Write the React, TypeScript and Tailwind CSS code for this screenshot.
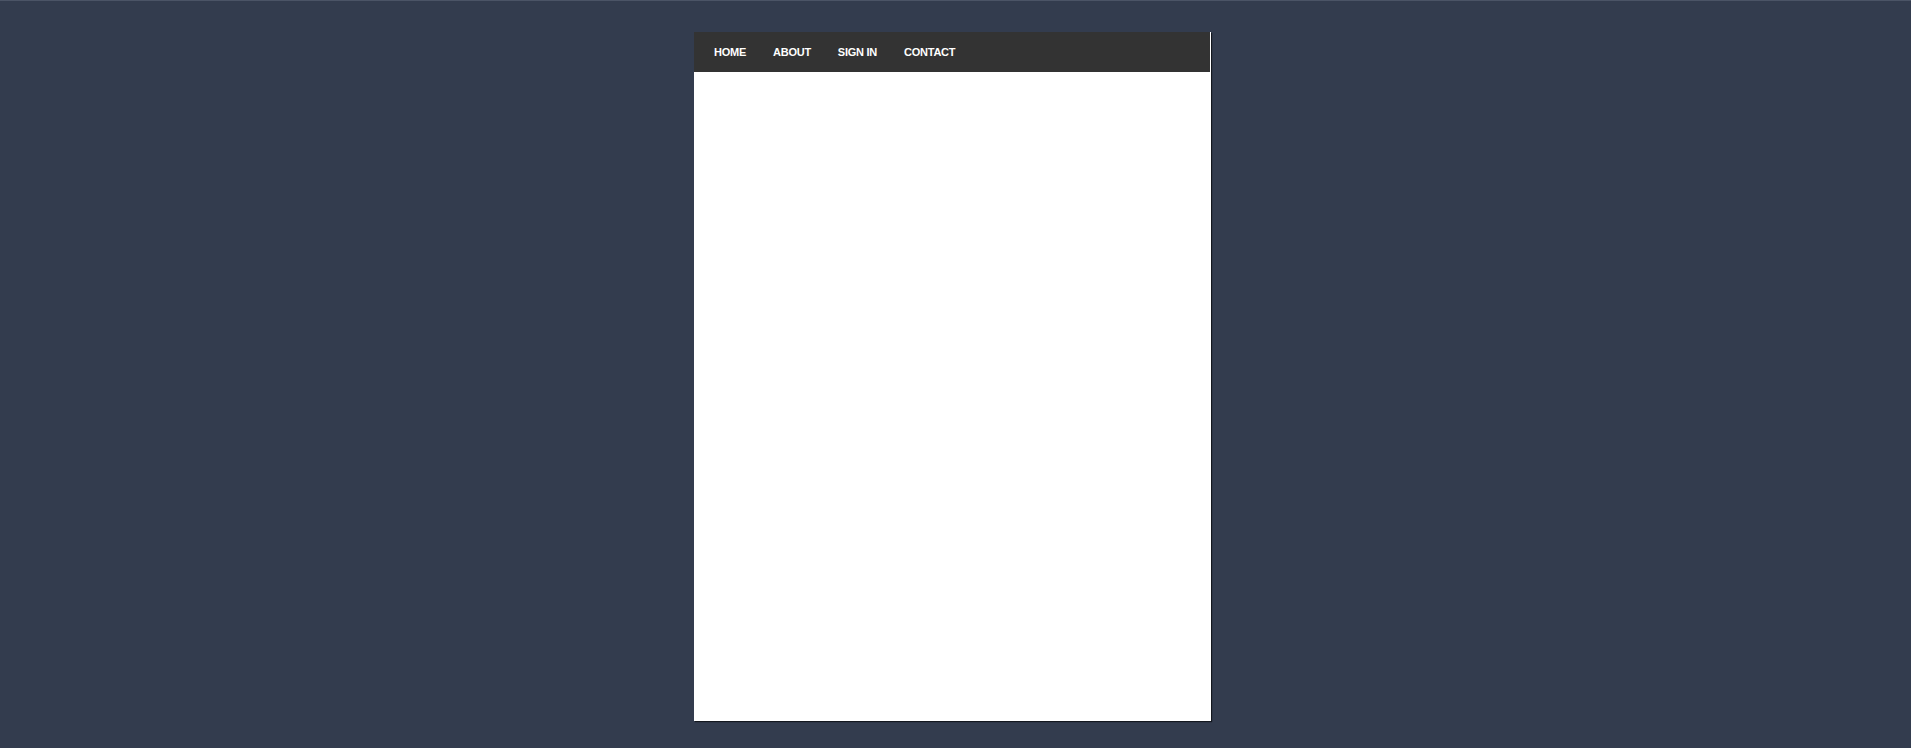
import React from "react";

export default function App() {
  const links = ["HOME", "ABOUT", "SIGN IN", "CONTACT"];
  return (
    <div
      className="min-h-[748px] w-full bg-[#333c4e] border-t border-[#4b5466] flex justify-center pr-[6px] pt-[31px]"
      style={{ fontFamily: '"Liberation Sans", Arial, sans-serif' }}
    >
      <div className="w-[517px] h-[689px] bg-white shadow-[1px_1px_1px_rgba(0,0,0,0.6)] self-start">
        <nav className="w-[516px] h-[40px] bg-[#333333] flex items-center pl-[6.5px]">
          {links.map((l) => (
            <a
              key={l}
              href="#"
              className="px-[13.5px] text-[11px] font-bold text-white leading-none tracking-[-0.25px]"
            >
              {l}
            </a>
          ))}
        </nav>
      </div>
    </div>
  );
}
